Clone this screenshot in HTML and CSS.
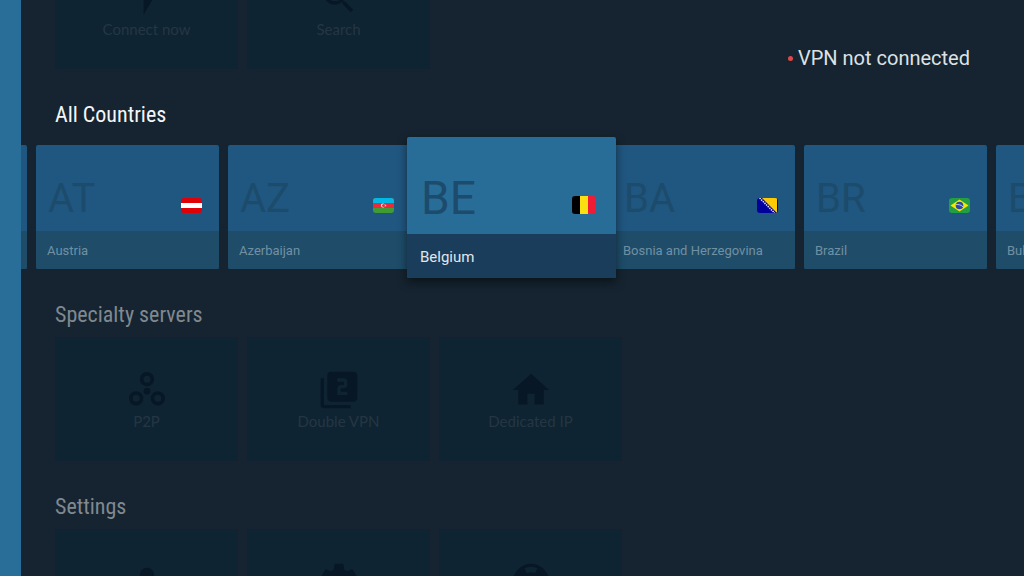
FILE: index.html
```
<!DOCTYPE html>
<html lang="en">
  <head>
    <meta charset="utf-8">
    <title>VPN</title>
    <link rel="stylesheet" href="styles.css">
  </head>
  <body>
    <aside class="sidebar"></aside>

    <main class="browse">
      <section class="row">
        <div class="cards">
          <button class="tile">
            <svg viewBox="0 0 24 24"><path d="M7 2v11h3v9l7-12h-4l4-8z"/></svg>
            <span>Connect now</span>
          </button>
          <button class="tile">
            <svg viewBox="0 0 24 24"><path d="M15.5 14h-.79l-.28-.27A6.47 6.47 0 0 0 16 9.5 6.5 6.5 0 1 0 9.5 16c1.61 0 3.09-.59 4.23-1.57l.27.28v.79l5 4.99L20.49 19zm-6 0a4.5 4.5 0 1 1 0-9 4.5 4.5 0 0 1 0 9z"/></svg>
            <span>Search</span>
          </button>
        </div>
      </section>

      <section class="row active">
        <h2>All Countries</h2>
        <div class="cards countries">
          <button class="country">
            <span class="media"></span>
            <span class="name"></span>
          </button>
          <button class="country">
            <span class="media">
              <span class="code">AT</span>
              <svg class="flag" viewBox="0 0 21 15">
                <rect width="21" height="15" fill="#e00008"/>
                <rect y="5" width="21" height="5" fill="#fff"/>
              </svg>
            </span>
            <span class="name">Austria</span>
          </button>
          <button class="country">
            <span class="media">
              <span class="code">AZ</span>
              <svg class="flag" viewBox="0 0 21 15">
                <rect width="21" height="15" fill="#3f9c35"/>
                <rect width="21" height="10" fill="#ed2939"/>
                <rect width="21" height="5" fill="#00b9e4"/>
                <circle cx="10" cy="7.5" r="2" fill="#fff"/>
                <circle cx="10.6" cy="7.5" r="1.6" fill="#ed2939"/>
                <path fill="#fff" d="M12.5 6.3l.3.9.9.3-.9.3-.3.9-.3-.9-.9-.3.9-.3z"/>
              </svg>
            </span>
            <span class="name">Azerbaijan</span>
          </button>
          <button class="country focused">
            <span class="media">
              <span class="code">BE</span>
              <svg class="flag" viewBox="0 0 24 18">
                <rect width="8" height="18" fill="#000"/>
                <rect x="8" width="8" height="18" fill="#fae010"/>
                <rect x="16" width="8" height="18" fill="#f01c36"/>
              </svg>
            </span>
            <span class="name">Belgium</span>
          </button>
          <button class="country">
            <span class="media">
              <span class="code">BA</span>
              <svg class="flag" viewBox="0 0 21 15">
                <rect width="21" height="15" fill="#00009c"/>
                <path fill="#fecb00" d="M5 0h15v15z"/>
                <path stroke="#dfe3f5" stroke-width="1.6" stroke-dasharray="1.4 .9" d="M2.6 0l15 15"/>
              </svg>
            </span>
            <span class="name">Bosnia and Herzegovina</span>
          </button>
          <button class="country">
            <span class="media">
              <span class="code">BR</span>
              <svg class="flag" viewBox="0 0 21 15">
                <rect width="21" height="15" fill="#229e45"/>
                <path fill="#f8e509" d="M10.5 1.4l9 6.1-9 6.1-9-6.1z"/>
                <circle cx="10.5" cy="7.5" r="3.8" fill="#2b49a3"/>
                <path fill="none" stroke="#dfe9ef" stroke-width=".8" d="M7 6.6c2.5-.4 5.2.4 7 2.2"/>
              </svg>
            </span>
            <span class="name">Brazil</span>
          </button>
          <button class="country">
            <span class="media">
              <span class="code">BG</span>
            </span>
            <span class="name">Bulgaria</span>
          </button>
        </div>
      </section>

      <section class="row">
        <h2>Specialty servers</h2>
        <div class="cards">
          <button class="tile">
            <svg viewBox="0 0 24 24">
              <g class="rings">
                <circle cx="12" cy="5.5" r="3.2"/>
                <circle cx="5.5" cy="17" r="3.2"/>
                <circle cx="18.5" cy="17" r="3.2"/>
              </g>
              <circle cx="12" cy="12.7" r="2"/>
            </svg>
            <span>P2P</span>
          </button>
          <button class="tile">
            <svg viewBox="0 0 24 24"><path d="M3 5H1v16c0 1.1.9 2 2 2h16v-2H3V5zM21 1H7c-1.1 0-2 .9-2 2v14c0 1.1.9 2 2 2h14c1.1 0 2-.9 2-2V3c0-1.1-.9-2-2-2zm-4 14h-6v-4c0-1.110.9-2 2-2h2V7h-4V5h4c1.1 0 2 .89 2 2v2c0 1.110-.9 2-2 2h-2v2h4v2z"/></svg>
            <span>Double VPN</span>
          </button>
          <button class="tile">
            <svg viewBox="1 1 22 22"><path d="M10 20v-6h4v6h5v-8h3L12 3 2 12h3v8z"/></svg>
            <span>Dedicated IP</span>
          </button>
        </div>
      </section>

      <section class="row">
        <h2>Settings</h2>
        <div class="cards">
          <button class="tile">
            <svg viewBox="0 0 24 24"><path d="M12 12a4.300 4.300 0 1 0 0-8.600 4.300 4.300 0 0 0 0 8.600zm0 2c-2.670 0-8 1.340-8 4v2h16v-2c0-2.660-5.330-4-8-4z"/></svg>
          </button>
          <button class="tile">
            <svg viewBox="1 1 22 22"><path d="M19.430 12.980a7.800 7.800 0 0 0 0-1.960l2.110-1.650a.5.5 0 0 0 .12-.64l-2-3.460a.5.5 0 0 0-.61-.22l-2.490 1a7.300 7.300 0 0 0-1.690-.98l-.38-2.650A.49.49 0 0 0 14 2h-4a.49.49 0 0 0-.49.420l-.38 2.650c-.61.25-1.170.59-1.690.98l-2.490-1a.5.5 0 0 0-.61.220l-2 3.460a.5.5 0 0 0 .12.640l2.110 1.650a7.900 7.900 0 0 0 0 1.960l-2.110 1.650a.5.5 0 0 0-.12.640l2 3.460c.12.220.39.300.61.220l2.490-1c.52.4 1.080.73 1.690.98l.38 2.650c.03.240.24.420.49.420h4c.25 0 .46-.18.49-.42l.38-2.650c.61-.25 1.170-.59 1.690-.98l2.490 1c.23.090.49 0 .61-.22l2-3.460a.5.5 0 0 0-.12-.64zM12 15.500a3.500 3.500 0 1 1 0-7 3.500 3.500 0 0 1 0 7z"/></svg>
          </button>
          <button class="tile">
            <svg viewBox="1 1 22 22"><path fill-rule="evenodd" d="M12 2a10 10 0 1 0 0 20 10 10 0 0 0 0-20zM8.500 4.400a8 8 0 0 1 7 0l-1.200 2.800a5 5 0 0 0-4.600 0zM4.400 8.500l2.800 1.200a5 5 0 0 0 0 4.600l-2.800 1.200a8 8 0 0 1 0-7zM19.600 8.500a8 8 0 0 1 0 7l-2.800-1.200a5 5 0 0 0 0-4.600zM12 9a3 3 0 1 1 0 6 3 3 0 0 1 0-6z"/></svg>
          </button>
        </div>
      </section>
    </main>

    <div class="status"><i class="dot"></i>VPN not connected</div>
  </body>
</html>
```
FILE: styles.css
```
* {
  box-sizing: border-box;
}

body {
  margin: 0;
  display: flex;
  height: 100vh;
  overflow: hidden;
  background: #152430;
  font-family: Roboto, "Liberation Sans", sans-serif;
}

button {
  border: none;
  padding: 0;
  font: inherit;
  text-align: left;
}

.sidebar {
  width: 21px;
  flex-shrink: 0;
  background: #286e99;
}

/* scrolled down so the second row has the focus */
.browse {
  flex: 1;
  min-width: 0;
  margin-top: -55px;
  overflow: hidden;
}

.row {
  padding-left: 34px;
}

.row h2 {
  margin: 0;
  padding: 34px 0 10px;
  font-family: "Roboto Condensed", Roboto, sans-serif;
  font-size: 22px;
  font-weight: 400;
  line-height: 24px;
  color: #808990;
}

.row.active h2 {
  color: #f4f6f7;
}

.cards {
  display: flex;
  gap: 9px;
}

.tile {
  display: flex;
  flex-direction: column;
  align-items: center;
  flex: 0 0 183px;
  height: 124px;
  padding-top: 33px;
  border-radius: 2px;
  background: #0e2432;
  color: #253643;
  font-family: Lato, sans-serif;
  font-size: 15px;
  line-height: 22px;
}

.tile svg {
  width: 40px;
  height: 40px;
  fill: #081725;
}

.tile .rings {
  fill: none;
  stroke: #081725;
  stroke-width: 2.2;
}

/* countries */
.countries {
  margin-top: 8px;
  margin-left: -211px;
}

.country {
  display: flex;
  flex-direction: column;
  flex: 0 0 183px;
  height: 124px;
  border-radius: 2px;
  overflow: hidden;
  background: #205780;
}

.media {
  display: flex;
  flex: 1;
  align-self: stretch;
  align-items: flex-end;
  justify-content: space-between;
  padding: 0 17px 18px 12px;
}

.code {
  font-size: 40px;
  line-height: 28px;
  color: #1c4b6c;
}

.flag {
  width: 21px;
  height: 15px;
  border-radius: 3px;
}

.name {
  align-self: stretch;
  height: 38px;
  padding: 0 11px;
  font-size: 13px;
  line-height: 40px;
  background: #1e4c69;
  color: #7190a3;
}

.focused {
  position: relative;
  flex-basis: 209px;
  height: 141px;
  margin: -8px -13px -9px;
  background: #286d98;
  box-shadow: 0 4px 10px rgba(0, 0, 0, 0.5);
}

.focused .media {
  padding: 0 20px 20px 14px;
}

.focused .code {
  font-size: 46px;
  line-height: 32px;
}

.focused .flag {
  width: 24px;
  height: 18px;
}

.focused .name {
  height: 44px;
  padding: 0 13px;
  font-size: 15px;
  line-height: 46px;
  background: #193d5a;
  color: #e0e6ea;
}

.status {
  position: absolute;
  top: 46px;
  right: 54px;
  display: flex;
  align-items: center;
  gap: 5px;
  font-size: 20px;
  line-height: 24px;
  color: #dee1e4;
}

.dot {
  width: 5px;
  height: 5px;
  border-radius: 50%;
  background: #e04848;
}
```
